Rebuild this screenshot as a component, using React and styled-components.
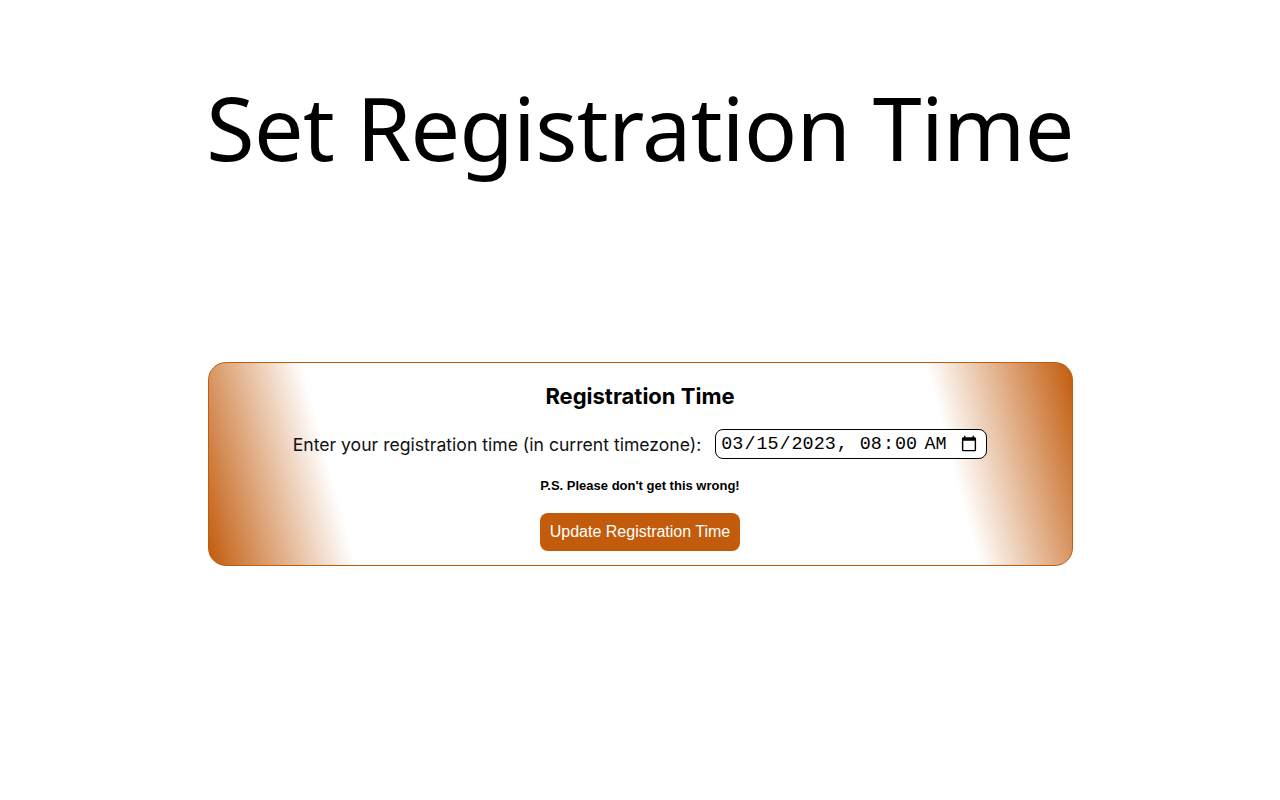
import React, { useState } from 'react';
import styled, { createGlobalStyle } from 'styled-components';

const ORANGE = '#c25b0c';

const GlobalStyle = createGlobalStyle`
  html, body {
    margin: 0;
    padding: 0;
    background: #fff;
  }
`;

const Page = styled.div`
  display: flex;
  flex-direction: column;
  align-items: center;
  width: 100%;
  min-height: 100vh;
`;

const Title = styled.h1`
  margin: 67px 0 0;
  font-family: 'Noto Sans', sans-serif;
  font-weight: 400;
  font-size: 88px;
  line-height: 120px;
  letter-spacing: -0.6px;
  color: #000;
  text-align: center;
`;

const Card = styled.section`
  box-sizing: border-box;
  width: 865px;
  margin-top: 175px;
  padding: 18px 20px 14px;
  border: 1px solid ${ORANGE};
  border-radius: 18px;
  background: linear-gradient(75deg, ${ORANGE} 0%, #fff 16%, #fff 84%, ${ORANGE} 100%);
  display: flex;
  flex-direction: column;
  align-items: center;
  font-family: Inter, 'Liberation Sans', sans-serif;
`;

const CardTitle = styled.h2`
  margin: 0;
  font-size: 22px;
  font-weight: 700;
  line-height: 30px;
  color: #000;
`;

const Row = styled.label`
  display: flex;
  align-items: center;
  gap: 14px;
  margin-top: 18px;
  font-size: 17.6px;
  color: #111;
`;

const DateInput = styled.input`
  box-sizing: border-box;
  height: 30px;
  width: 272px;
  padding: 0 6px 0 4px;
  border: 1.5px solid #000;
  border-radius: 8px;
  background: #fff;
  font-family: 'Liberation Mono', 'Courier New', monospace;
  font-size: 18.4px;
  color: #000;
`;

const Note = styled.p`
  margin: 19px 0 0;
  font-family: 'Liberation Sans', Arial, sans-serif;
  font-size: 13px;
  line-height: 15px;
  font-weight: 700;
  color: #000;
`;

const Button = styled.button`
  margin-top: 20px;
  height: 38px;
  padding: 0 10px;
  border: none;
  border-radius: 8px;
  background: ${ORANGE};
  color: #fff;
  font-family: 'Liberation Sans', Arial, sans-serif;
  font-size: 16px;
  cursor: pointer;
`;

export default function App() {
  const [value, setValue] = useState('2023-03-15T08:00');

  return (
    <>
      <GlobalStyle />
      <Page>
        <Title>Set Registration Time</Title>
        <Card>
          <CardTitle>Registration Time</CardTitle>
          <Row>
            Enter your registration time (in current timezone):
            <DateInput
              type="datetime-local"
              value={value}
              onChange={(e) => setValue(e.target.value)}
            />
          </Row>
          <Note>P.S. Please don't get this wrong!</Note>
          <Button>Update Registration Time</Button>
        </Card>
      </Page>
    </>
  );
}
